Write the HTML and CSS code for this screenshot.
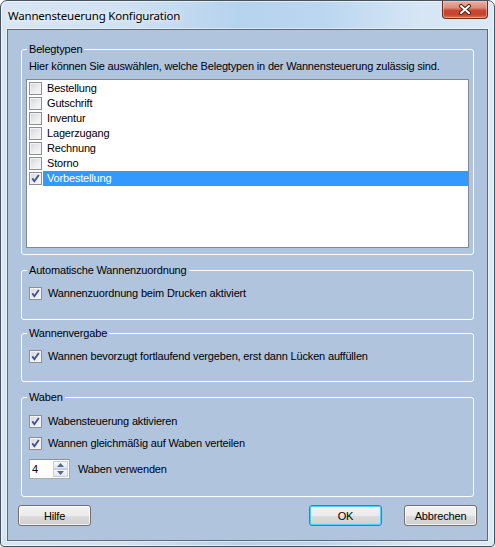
FILE: index.html
```html
<!DOCTYPE html>
<html lang="de">
<head>
    <meta charset="UTF-8">
    <title>Wannensteuerung Konfiguration</title>
    <link rel="stylesheet" href="styles.css">
</head>
<body>
    <div class="window">
        <!-- Title bar -->
        <div class="titlebar">
            <span class="title">Wannensteuerung Konfiguration</span>
            <button class="close" aria-label="Schließen">
                <svg width="14" height="11" viewBox="0 0 14 11">
                    <path d="M3 2 L11 9 M11 2 L3 9" stroke="#4a2218" stroke-width="4" stroke-linecap="round"/>
                    <path d="M3 2 L11 9 M11 2 L3 9" stroke="#fff" stroke-width="2" stroke-linecap="round"/>
                </svg>
            </button>
        </div>

        <div class="client">
            <!-- Belegtypen -->
            <fieldset class="group group-types">
                <legend>Belegtypen</legend>
                <p class="hint">Hier können Sie auswählen, welche Belegtypen in der Wannensteuerung zulässig sind.</p>
                <ul class="listbox">
                    <li class="item"><span class="check"></span><span class="item-text">Bestellung</span></li>
                    <li class="item"><span class="check"></span><span class="item-text">Gutschrift</span></li>
                    <li class="item"><span class="check"></span><span class="item-text">Inventur</span></li>
                    <li class="item"><span class="check"></span><span class="item-text">Lagerzugang</span></li>
                    <li class="item"><span class="check"></span><span class="item-text">Rechnung</span></li>
                    <li class="item"><span class="check"></span><span class="item-text">Storno</span></li>
                    <li class="item selected">
                        <span class="check"><svg width="11" height="11" viewBox="0 0 11 11"><path d="M2.3 5.4 L4.4 8.2 L8.8 2" fill="none" stroke="#3b4f95" stroke-width="1.8"/></svg></span>
                        <span class="item-text">Vorbestellung</span>
                    </li>
                </ul>
            </fieldset>

            <!-- Automatische Wannenzuordnung -->
            <fieldset class="group group-auto">
                <legend>Automatische Wannenzuordnung</legend>
                <label class="option">
                    <span class="check"><svg width="11" height="11" viewBox="0 0 11 11"><path d="M2.3 5.4 L4.4 8.2 L8.8 2" fill="none" stroke="#3b4f95" stroke-width="1.8"/></svg></span>
                    Wannenzuordnung beim Drucken aktiviert
                </label>
            </fieldset>

            <!-- Wannenvergabe -->
            <fieldset class="group group-assign">
                <legend>Wannenvergabe</legend>
                <label class="option">
                    <span class="check"><svg width="11" height="11" viewBox="0 0 11 11"><path d="M2.3 5.4 L4.4 8.2 L8.8 2" fill="none" stroke="#3b4f95" stroke-width="1.8"/></svg></span>
                    Wannen bevorzugt fortlaufend vergeben, erst dann Lücken auffüllen
                </label>
            </fieldset>

            <!-- Waben -->
            <fieldset class="group group-combs">
                <legend>Waben</legend>
                <label class="option option-first">
                    <span class="check"><svg width="11" height="11" viewBox="0 0 11 11"><path d="M2.3 5.4 L4.4 8.2 L8.8 2" fill="none" stroke="#3b4f95" stroke-width="1.8"/></svg></span>
                    Wabensteuerung aktivieren
                </label>
                <label class="option">
                    <span class="check"><svg width="11" height="11" viewBox="0 0 11 11"><path d="M2.3 5.4 L4.4 8.2 L8.8 2" fill="none" stroke="#3b4f95" stroke-width="1.8"/></svg></span>
                    Wannen gleichmäßig auf Waben verteilen
                </label>
                <div class="spin-row">
                    <div class="spin">
                        <span class="spin-value">4</span>
                        <div class="spin-buttons">
                            <span class="spin-btn"><svg width="7" height="4" viewBox="0 0 7 4"><path d="M0 4 L3.5 0 L7 4 Z" fill="#4d6a9c"/></svg></span>
                            <span class="spin-btn"><svg width="7" height="4" viewBox="0 0 7 4"><path d="M0 0 L3.5 4 L7 0 Z" fill="#4d6a9c"/></svg></span>
                        </div>
                    </div>
                    <span>Waben verwenden</span>
                </div>
            </fieldset>

            <!-- Buttons -->
            <div class="buttons">
                <button class="btn">Hilfe</button>
                <button class="btn btn-default">OK</button>
                <button class="btn">Abbrechen</button>
            </div>
        </div>
    </div>
</body>
</html>
```

FILE: styles.css
```css
/* Reset */
* {
    margin: 0;
    padding: 0;
    box-sizing: border-box;
}

html, body {
    background: #fff;
}

body {
    font-family: "Liberation Sans", Arial, sans-serif;
    font-size: 11px;
    letter-spacing: -0.17px;
    color: #000;
}

/* Window frame */
.window {
    width: 495px;
    height: 547px;
    display: flex;
    flex-direction: column;
    border: 1px solid #47525f;
    border-radius: 7px 7px 4px 4px;
    background: linear-gradient(90deg, #d8e6f4 0%, #cfe1f3 25%, #b6d3ee 48%, #bad6f0 65%, #d6e6f5 85%, #dce9f6 100%);
    box-shadow: inset 0 0 0 1px rgba(255, 255, 255, 0.55);
    overflow: hidden;
}

/* Title bar */
.titlebar {
    height: 28px;
    flex-shrink: 0;
    display: flex;
    justify-content: space-between;
    align-items: flex-start;
}

.title {
    font-family: "Noto Sans", sans-serif;
    font-size: 11.5px;
    letter-spacing: -0.2px;
    line-height: 16px;
    margin: 7px 0 0 7px;
    text-shadow: 0 0 6px #fff, 0 0 10px rgba(255, 255, 255, 0.8);
}

.close {
    width: 46px;
    height: 18px;
    margin-right: 6px;
    display: flex;
    justify-content: center;
    align-items: center;
    border: 1px solid #6b2b20;
    border-top: none;
    border-radius: 0 0 4px 4px;
    background: linear-gradient(#eab0a3 0%, #dc8a77 40%, #c9492f 55%, #c4452c 80%, #d8735a 100%);
    box-shadow: inset 0 0 0 1px rgba(255, 220, 210, 0.45);
}

/* Client area */
.client {
    height: 512px;
    margin: 0 6px;
    padding: 13px 10px 0;
    display: flex;
    flex-direction: column;
    background: #b0c4de;
    border: 1px solid #5e6b7b;
    box-shadow: 0 0 0 1px rgba(255, 255, 255, 0.45);
}

/* Group boxes */
.group {
    min-width: 0;
    margin: 0 3px;
    padding: 0 4px;
    border: 1px solid #fff;
    border-radius: 3px;
}

.group legend {
    margin-left: 1px;
    padding: 0 2px;
    line-height: 13px;
}

.group-types {
    padding-bottom: 6px;
}

.group-auto {
    margin-top: 9px;
    padding-bottom: 19px;
}

.group-assign {
    margin-top: 7px;
    padding-bottom: 18px;
}

.group-combs {
    margin-top: 9px;
    padding-bottom: 17px;
}

.hint {
    margin-top: 4px;
    padding-left: 3px;
    line-height: 13px;
}

/* List with checkboxes */
.listbox {
    height: 169px;
    margin-top: 6px;
    padding-top: 1px;
    list-style: none;
    background: #fff;
    border: 1px solid #828790;
}

.item {
    height: 15px;
    display: flex;
    align-items: center;
}

.item .check {
    margin: 0 1px 0 2px;
}

.item-text {
    flex: 1;
    padding-left: 4px;
    line-height: 15px;
}

.item.selected .item-text {
    background: #3399ff;
    color: #fff;
}

/* Checkbox */
.check {
    width: 13px;
    height: 13px;
    flex-shrink: 0;
    display: flex;
    border: 1px solid #8e8f8f;
    background: linear-gradient(135deg, #d3d6da 0%, #eceef0 60%, #f7f7f7 100%);
    box-shadow: inset 0 0 0 1px #f3f3f3;
}

.option {
    height: 13px;
    margin-top: 10px;
    padding-left: 3px;
    display: flex;
    align-items: center;
    gap: 6px;
    line-height: 13px;
}

.option-first {
    margin-top: 11px;
}

.group-combs .option + .option {
    margin-top: 9px;
}

/* Numeric up-down */
.spin-row {
    margin-top: 9px;
    padding-left: 3px;
    display: flex;
    align-items: center;
    gap: 8px;
}

.spin {
    width: 41px;
    height: 20px;
    display: flex;
    background: #fff;
    border: 1px solid #abadb3;
    border-top-color: #8d9096;
}

.spin-value {
    padding-left: 2px;
    line-height: 18px;
}

.spin-buttons {
    margin: 1px 1px 1px auto;
    display: flex;
    flex-direction: column;
}

.spin-btn {
    width: 15px;
    height: 8px;
    display: flex;
    justify-content: center;
    align-items: center;
    border: 1px solid #c9d0da;
    background: linear-gradient(#f6f8fa, #e4e9ef);
}

/* Dialog buttons */
.buttons {
    margin-top: 8px;
    display: flex;
    gap: 22px;
}

.btn {
    width: 73px;
    height: 21px;
    font-family: inherit;
    font-size: 11px;
    letter-spacing: -0.17px;
    color: #000;
    border: 1px solid #707070;
    border-radius: 3px;
    background: linear-gradient(#f2f2f2 0%, #ebebeb 50%, #dddddd 51%, #cfcfcf 100%);
    box-shadow: inset 0 0 0 1px rgba(255, 255, 255, 0.75);
}

.btn-default {
    margin-left: auto;
    border-color: #3c7fb1;
    box-shadow: inset 0 0 0 1px #48d2fe;
}
```
